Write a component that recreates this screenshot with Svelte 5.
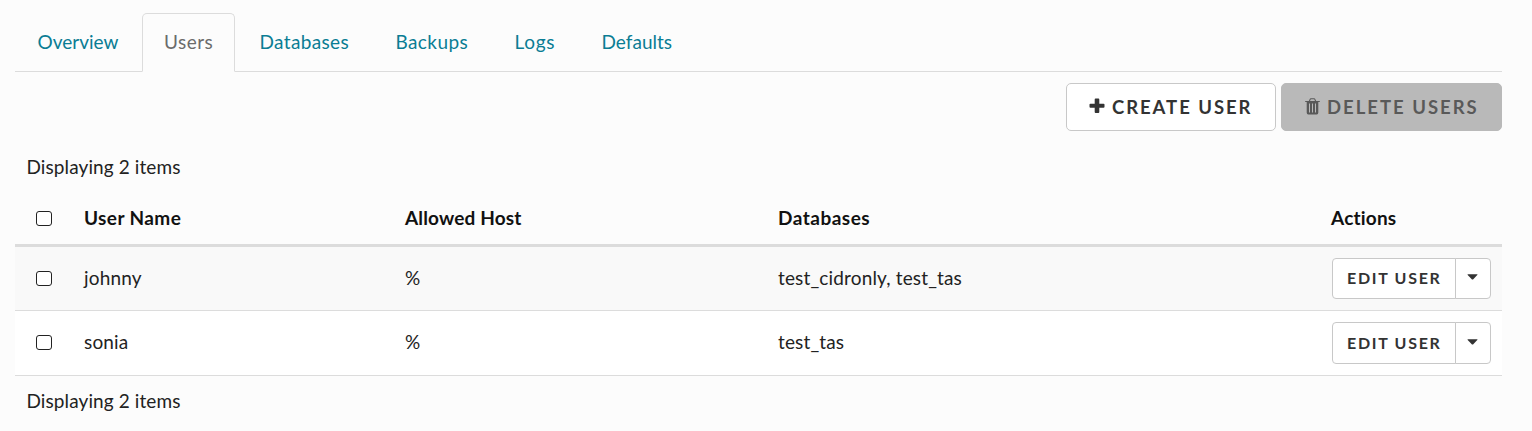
<script>
  const tabs = [
    { name: 'Overview', width: 127, spacing: 0 },
    { name: 'Users', width: 95, spacing: 0.45 },
    { name: 'Databases', width: 136, spacing: 0.35 },
    { name: 'Backups', width: 119, spacing: 0.4 },
    { name: 'Logs', width: 87, spacing: 0.7 },
    { name: 'Defaults', width: 117, spacing: 0.02 }
  ];
  const activeTab = 'Users';

  const columns = [
    { name: 'User Name', spacing: 0.4 },
    { name: 'Allowed Host', spacing: 0.15 },
    { name: 'Databases', spacing: 0.5 },
    { name: 'Actions', spacing: 0.2 }
  ];
  const users = [
    { name: 'johnny', host: '%', databases: 'test_cidronly, test_tas' },
    { name: 'sonia', host: '%', databases: 'test_tas' }
  ];
</script>

<main>
  <nav>
    {#each tabs as tab}
      <div class="slot" style="width:{tab.width}px">
        <a class:active={tab.name === activeTab} style="letter-spacing:{tab.spacing}px">{tab.name}</a>
      </div>
    {/each}
  </nav>

  <div class="toolbar">
    <button class="btn create">
      <svg width="16" height="16" viewBox="0 0 16 16"><path d="M6.6 .5h2.8q.9 0 .9.9v4.3h4.3q.9 0 .9.9v2.2q0 .9-.9.9h-4.3V14q0 .9-.9.9H6.6q-.9 0-.9-.9V9.7H1.4q-.9 0-.9-.9V6.6q0-.9.9-.9h4.3V1.4q0-.9.9-.9z" fill="currentColor" /></svg>
      <span>CREATE USER</span>
    </button>
    <button class="btn delete" disabled>
      <svg width="15" height="17" viewBox="0 0 15 17">
        <path d="M4.3 3.300l.7-1.700q.3-.8 1-.8h3q.7 0 1 .8l.7 1.700" fill="none" stroke="currentColor" stroke-width="1.1" />
        <path d="M.2 3h14.600v1.100h-1.500v10.500q0 1.900-1.500 1.900H3.200q-1.500 0-1.500-1.900V4.100H.2z" fill="currentColor" />
        <path d="M4.500 5.500v9M7.500 5.500v9M10.500 5.500v9" stroke="#b9b9b9" stroke-width="1" />
      </svg>
      <span>DELETE USERS</span>
    </button>
  </div>

  <p class="count top">Displaying 2 items</p>

  <div class="row head">
    <i class="check"></i>
    {#each columns as column}
      <b style="letter-spacing:{column.spacing}px">{column.name}</b>
    {/each}
  </div>
  {#each users as user}
    <div class="row user">
      <i class="check"></i>
      <span>{user.name}</span>
      <span>{user.host}</span>
      <span>{user.databases}</span>
      <div class="split">
        <button class="edit">EDIT USER</button>
        <button class="more" aria-label="More">
          <svg width="11" height="6" viewBox="0 0 11 6"><path d="M.9 .3h9.200q.7 0 .2.6L6 5.400q-.5.4-1 0L.7.900Q.2.300.9.300z" fill="currentColor" /></svg>
        </button>
      </div>
    </div>
  {/each}

  <p class="count">Displaying 2 items</p>
</main>

<style>
  :global(body) {
    background: #fcfcfc;
  }
  main {
    box-sizing: border-box;
    width: 1532px;
    height: 431px;
    padding: 13px 30px 0 15px;
    overflow: hidden;
    font-family: Lato, 'Liberation Sans', sans-serif;
    font-size: 19px;
    line-height: 24px;
    color: #222;
  }
  nav {
    display: flex;
    height: 58px;
    border-bottom: 1px solid #dcdcdc;
  }
  .slot {
    flex: none;
  }
  a {
    display: block;
    box-sizing: border-box;
    height: 59px;
    width: calc(100% - 2px);
    padding: 16px 0 0 21.5px;
    border: 1px solid transparent;
    border-radius: 5px 5px 0 0;
    color: #0a7d94;
    white-space: nowrap;
  }
  a.active {
    padding-left: 21px;
    color: #6b6b6b;
    background: #fcfcfc;
    border-color: #dcdcdc #dcdcdc #fcfcfc;
  }
  .toolbar {
    display: flex;
    justify-content: flex-end;
    gap: 5px;
    margin-top: 11px;
  }
  button {
    box-sizing: border-box;
    margin: 0;
    font-family: inherit;
    font-weight: 700;
    color: #333;
    background: #fff;
    white-space: nowrap;
  }
  .btn {
    display: flex;
    align-items: center;
    height: 48px;
    padding: 0 0 0 23px;
    border: 1px solid #c8c8c8;
    border-radius: 5px;
    font-size: 18.5px;
    line-height: 24px;
  }
  .btn span {
    margin-top: -1px;
  }
  .create {
    width: 210px;
    letter-spacing: 1.95px;
  }
  .create svg {
    margin: -2px 7px 0 -1px;
  }
  .delete {
    width: 221px;
    background: #b9b9b9;
    border-color: #b9b9b9;
    color: #595959;
    letter-spacing: 2px;
  }
  .delete svg {
    margin: -2px 7px 0 0;
  }
  .count {
    margin: 13px 0 0 11.5px;
    letter-spacing: 0.1px;
  }
  .count.top {
    margin-top: 24px;
  }
  .row {
    display: grid;
    grid-template-columns: 69px 321px 373px 553px 1fr;
    align-items: center;
    box-sizing: border-box;
    letter-spacing: 0.15px;
  }
  .head {
    height: 68px;
    padding-top: 13px;
    border-bottom: 3px solid #dcdcdc;
    color: #111;
  }
  .head b {
    margin-top: -1px;
  }
  .user {
    height: 64px;
    border-bottom: 1px solid #dcdcdc;
    background: #f9f9f9;
  }
  .user > span {
    margin-top: -2px;
  }
  .user + .user {
    height: 65px;
    background: #fff;
  }
  .user + .user > .check {
    margin-bottom: 1px;
  }
  .check {
    box-sizing: border-box;
    width: 16px;
    height: 15px;
    margin-left: 21px;
    border: 1.5px solid #222;
    border-radius: 3px;
    background: #fff;
  }
  .split {
    display: flex;
    height: 41px;
    width: 159px;
    margin-left: 1px;
  }
  .user + .user .split {
    height: 42px;
  }
  .edit {
    width: 124px;
    padding: 0 0 3px 14px;
    border: 1px solid #c8c8c8;
    border-radius: 4px 0 0 4px;
    font-size: 16px;
    letter-spacing: 1.7px;
    text-align: left;
  }
  .user + .user .edit {
    padding-bottom: 2px;
  }
  .more {
    display: flex;
    align-items: center;
    justify-content: center;
    width: 36px;
    margin-left: -1px;
    padding: 0 1px 3px 0;
    border: 1px solid #c8c8c8;
    border-radius: 0 4px 4px 0;
  }
</style>
